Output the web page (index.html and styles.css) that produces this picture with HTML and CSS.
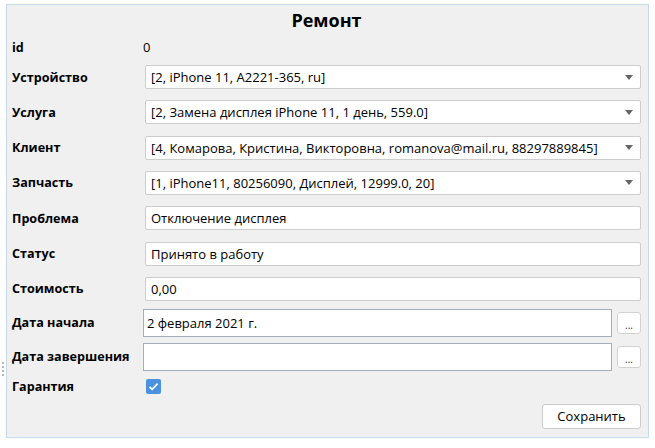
FILE: index.html
```html
<!DOCTYPE html>
<html lang="ru">
<head>
<meta charset="utf-8">
<title>Ремонт</title>
<link rel="stylesheet" href="styles.css">
</head>
<body>
<div class="grip"><span></span><span></span><span></span><span></span></div>
<div class="panel">
  <div class="title">Ремонт</div>
  <div class="row row-id">
    <div class="label">id</div>
    <div class="value">0</div>
  </div>
  <div class="row row-field first">
    <div class="label">Устройство</div>
    <div class="combo"><span class="text">[2, iPhone 11, A2221-365, ru]</span><span class="arrow"></span></div>
  </div>
  <div class="row row-field">
    <div class="label">Услуга</div>
    <div class="combo"><span class="text">[2, Замена дисплея iPhone 11, 1 день, 559.0]</span><span class="arrow"></span></div>
  </div>
  <div class="row row-field">
    <div class="label">Клиент</div>
    <div class="combo"><span class="text">[4, Комарова, Кристина, Викторовна, romanova@mail.ru, 88297889845]</span><span class="arrow"></span></div>
  </div>
  <div class="row row-field">
    <div class="label">Запчасть</div>
    <div class="combo"><span class="text">[1, iPhone11, 80256090, Дисплей, 12999.0, 20]</span><span class="arrow"></span></div>
  </div>
  <div class="row row-field">
    <div class="label">Проблема</div>
    <div class="edit">Отключение дисплея</div>
  </div>
  <div class="row row-field">
    <div class="label">Статус</div>
    <div class="edit">Принято в работу</div>
  </div>
  <div class="row row-field">
    <div class="label">Стоимость</div>
    <div class="edit">0,00</div>
  </div>
  <div class="row row-date first-date">
    <div class="label">Дата начала</div>
    <div class="date-wrap">
      <div class="date">2 февраля 2021 г.</div>
      <button class="dots">...</button>
    </div>
  </div>
  <div class="row row-date second-date">
    <div class="label">Дата завершения</div>
    <div class="date-wrap">
      <div class="date"></div>
      <button class="dots">...</button>
    </div>
  </div>
  <div class="row row-check">
    <div class="label">Гарантия</div>
    <div class="check">
      <svg width="15" height="15" viewBox="0 0 15 15"><rect x="0" y="0" width="15" height="15" rx="2" fill="#4a92df"/><path d="M3.5 7.8 L6.2 10.4 L11.6 4.6" fill="none" stroke="#fff" stroke-width="1.6"/></svg>
    </div>
  </div>
  <div class="actions">
    <button class="save">Сохранить</button>
  </div>
</div>
</body>
</html>
```
FILE: styles.css
```css
* { box-sizing: border-box; }
html, body { margin: 0; padding: 0; background: #ffffff; }
body {
  font-family: "Open Sans", "Noto Sans", sans-serif;
  font-size: 13px;
  color: #000;
  position: relative;
  width: 655px;
  height: 448px;
  overflow: hidden;
}
.grip {
  position: absolute;
  left: 2px;
  top: 362px;
  display: flex;
  flex-direction: column;
  gap: 2px;
}
.grip span {
  display: block;
  width: 2px;
  height: 2px;
  background: #b8b8b8;
}
.panel {
  margin: 4px 6px 0 6px;
  height: 434px;
  border: 1px solid #c8d9ec;
  background: #f0f0f0;
  padding: 0 7px 0 5px;
  display: flex;
  flex-direction: column;
}
.title {
  height: 32px;
  line-height: 31px;
  text-align: center;
  font-size: 18px;
  font-weight: 700;
}
.row {
  display: grid;
  grid-template-columns: 131px 1fr;
  align-items: center;
}
.label {
  font-weight: 700;
  font-size: 12.6px;
  white-space: nowrap;
}
.row-id { height: 20px; }
.value { padding-left: 0; }
.row-field { height: 24px; margin-top: 11.33px; }
.row-field.first { margin-top: 8px; }
.combo, .edit {
  margin-left: 2px;
  height: 100%;
  background: #fff;
  border: 1px solid #cdcdcd;
  border-radius: 2px;
  display: flex;
  align-items: center;
  padding-left: 5px;
  white-space: nowrap;
  overflow: hidden;
}
.combo .text { flex: 1; overflow: hidden; }
.arrow {
  width: 0;
  height: 0;
  border-left: 4px solid transparent;
  border-right: 4px solid transparent;
  border-top: 5px solid #666;
  margin-right: 7px;
  margin-left: 6px;
}
.row-date { height: 28px; }
.row-date.first-date { margin-top: 8px; }
.row-date.second-date { margin-top: 6px; }
.date-wrap {
  display: flex;
  align-items: center;
  gap: 5px;
  height: 100%;
}
.date {
  flex: 1;
  height: 100%;
  background: #fff;
  border: 1px solid #a5afba;
  display: flex;
  align-items: center;
  padding-left: 3px;
}
.dots {
  width: 24px;
  height: 22px;
  background: #fff;
  border: 1px solid #d2d2d2;
  border-radius: 3px;
  font-family: "Open Sans", sans-serif;
  font-size: 10px;
  color: #333;
  padding: 4px 0 0 0;
  line-height: 10px;
}
.row-check { height: 15px; margin-top: 7px; }
.check { display: flex; padding-left: 3px; }
.check svg { display: block; }
.actions {
  display: flex;
  justify-content: flex-end;
  margin-top: 11px;
}
.save {
  width: 99px;
  height: 25px;
  background: #fff;
  border: 1px solid #cccccc;
  border-radius: 3px;
  font-family: "Open Sans", sans-serif;
  font-size: 13px;
  color: #000;
  padding: 0;
}
```
